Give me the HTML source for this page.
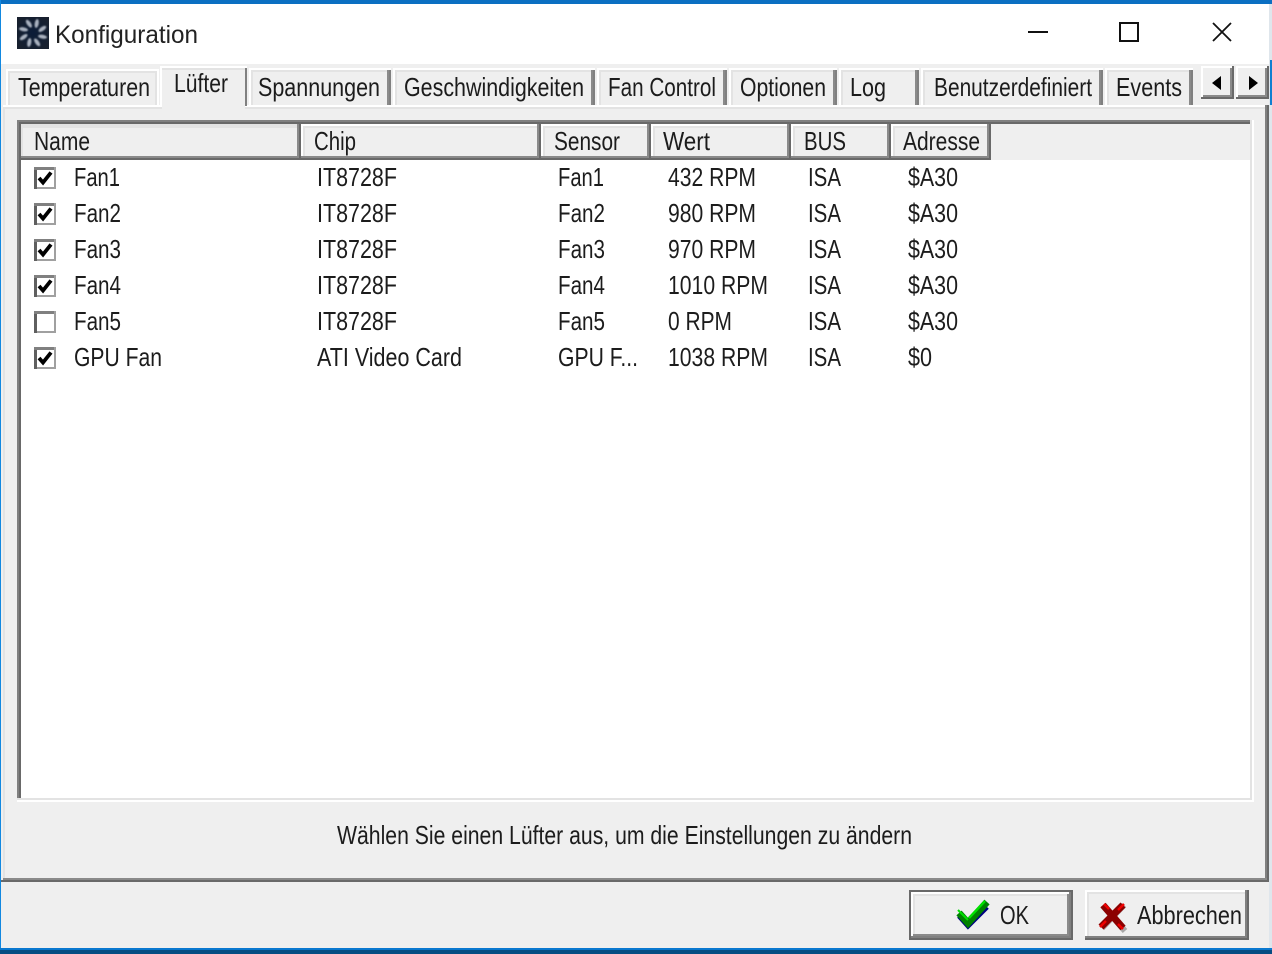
<!DOCTYPE html>
<html><head><meta charset="utf-8"><title>Konfiguration</title>
<style>
html,body{margin:0;padding:0;width:1272px;height:954px;overflow:hidden;background:#efefef}
svg{display:block}
text{font-family:"Liberation Sans",sans-serif;font-size:26px;fill:#1c1c1c}
.r rect{shape-rendering:crispEdges}
</style></head><body>
<svg width="1272" height="954" viewBox="0 0 1272 954" xmlns="http://www.w3.org/2000/svg">
<defs>
<radialGradient id="v" cx="50%" cy="50%" r="60%"><stop offset="0" stop-color="#0b1c38"/><stop offset="1" stop-color="#18202e"/></radialGradient>
<filter id="bl" x="-20%" y="-20%" width="140%" height="140%"><feGaussianBlur stdDeviation="0.9"/></filter>
<g id="cb" class="r">
<rect x="0" y="0" width="22" height="22" fill="#a0a0a0"/>
<rect x="0" y="0" width="3" height="22" fill="#5f5f5f"/>
<rect x="0" y="0" width="20" height="3" fill="#808080"/>
<rect x="3" y="3" width="17" height="17" fill="#fff"/>
</g>
<g id="ck"><polyline points="5,11 9,15.5 17,5.5" fill="none" stroke="#000" stroke-width="3.8"/></g>
</defs>

<g class="r">
<rect width="1272" height="954" fill="#efefef"/>
<!-- title bar + window frame -->
<rect x="0" y="0" width="1272" height="4" fill="#0b6fc2"/>
<rect x="0" y="4" width="1269" height="60" fill="#fff"/>
<rect x="0" y="0" width="1" height="950" fill="#1288e0"/>
<rect x="1269" y="4" width="3" height="946" fill="#dfe6ec"/>
<rect x="1270" y="60" width="2" height="45" fill="#0f7fd0"/>
<rect x="0" y="948" width="1272" height="2" fill="#0a78cf"/>
<rect x="0" y="950" width="1272" height="4" fill="#064c82"/>

<!-- page frame -->
<rect x="3" y="105" width="2" height="773" fill="#e3e3e3"/>
<rect x="3" y="105" width="1263" height="2" fill="#fff"/>
<rect x="5" y="107" width="1260" height="2" fill="#e3e3e3"/>
<rect x="1265" y="105" width="2" height="775" fill="#808080"/>
<rect x="1267" y="105" width="2" height="777" fill="#696969"/>
<rect x="3" y="878" width="1264" height="2" fill="#8a8a8a"/>
<rect x="1" y="880" width="1268" height="2" fill="#696969"/>

<!-- inactive tabs -->
<rect x="6" y="69" width="153" height="36" fill="#fff"/><rect x="8" y="71" width="149" height="34" fill="#e3e3e3"/><rect x="10" y="73" width="145" height="32" fill="#efefef"/>
<rect x="249" y="68" width="142" height="37" fill="#fff"/><rect x="251" y="70" width="136" height="35" fill="#e3e3e3"/><rect x="253" y="72" width="134" height="33" fill="#efefef"/><rect x="387" y="70" width="2" height="35" fill="#8a8a8a"/><rect x="389" y="70" width="2" height="35" fill="#808080"/>
<rect x="393" y="68" width="202" height="37" fill="#fff"/><rect x="395" y="70" width="196" height="35" fill="#e3e3e3"/><rect x="397" y="72" width="194" height="33" fill="#efefef"/><rect x="591" y="70" width="2" height="35" fill="#8a8a8a"/><rect x="593" y="70" width="2" height="35" fill="#808080"/>
<rect x="597" y="68" width="130" height="37" fill="#fff"/><rect x="599" y="70" width="124" height="35" fill="#e3e3e3"/><rect x="601" y="72" width="122" height="33" fill="#efefef"/><rect x="723" y="70" width="2" height="35" fill="#8a8a8a"/><rect x="725" y="70" width="2" height="35" fill="#808080"/>
<rect x="729" y="68" width="108" height="37" fill="#fff"/><rect x="731" y="70" width="102" height="35" fill="#e3e3e3"/><rect x="733" y="72" width="100" height="33" fill="#efefef"/><rect x="833" y="70" width="2" height="35" fill="#8a8a8a"/><rect x="835" y="70" width="2" height="35" fill="#808080"/>
<rect x="839" y="68" width="80" height="37" fill="#fff"/><rect x="841" y="70" width="74" height="35" fill="#e3e3e3"/><rect x="843" y="72" width="72" height="33" fill="#efefef"/><rect x="915" y="70" width="2" height="35" fill="#8a8a8a"/><rect x="917" y="70" width="2" height="35" fill="#808080"/>
<rect x="921" y="68" width="182" height="37" fill="#fff"/><rect x="923" y="70" width="176" height="35" fill="#e3e3e3"/><rect x="925" y="72" width="174" height="33" fill="#efefef"/><rect x="1099" y="70" width="2" height="35" fill="#8a8a8a"/><rect x="1101" y="70" width="2" height="35" fill="#808080"/>
<rect x="1105" y="68" width="88" height="37" fill="#fff"/><rect x="1107" y="70" width="82" height="35" fill="#e3e3e3"/><rect x="1109" y="72" width="80" height="33" fill="#efefef"/><rect x="1189" y="70" width="2" height="35" fill="#8a8a8a"/><rect x="1191" y="70" width="2" height="35" fill="#808080"/>

<!-- active tab -->
<rect x="160" y="66" width="87" height="41" fill="#fff"/>
<rect x="162" y="68" width="83" height="39" fill="#e3e3e3"/>
<rect x="162" y="70" width="83" height="39" fill="#efefef"/>
<rect x="245" y="68" width="2" height="38" fill="#808080"/>

<!-- scroll buttons -->
<rect x="1201" y="66" width="33" height="33" fill="#696969"/><rect x="1201" y="66" width="31" height="31" fill="#fff"/><rect x="1203" y="68" width="29" height="29" fill="#8a8a8a"/><rect x="1203" y="68" width="27" height="27" fill="#efefef"/>
<rect x="1236" y="66" width="33" height="33" fill="#696969"/><rect x="1236" y="66" width="31" height="31" fill="#fff"/><rect x="1238" y="68" width="29" height="29" fill="#8a8a8a"/><rect x="1238" y="68" width="27" height="27" fill="#efefef"/>

<!-- list view -->
<rect x="17" y="120" width="1237" height="682" fill="#fff"/>
<rect x="17" y="120" width="1235" height="680" fill="#e3e3e3"/>
<rect x="17" y="120" width="1233" height="678" fill="#808080"/>
<rect x="19" y="122" width="1231" height="676" fill="#696969"/>
<rect x="21" y="124" width="1229" height="674" fill="#fff"/>
<rect x="21" y="124" width="1229" height="36" fill="#efefef"/>

<!-- header sections -->
<rect x="21" y="124" width="280" height="36" fill="#696969"/><rect x="21" y="124" width="278" height="34" fill="#8a8a8a"/><rect x="21" y="124" width="276" height="32" fill="#e3e3e3"/><rect x="23" y="126" width="274" height="30" fill="#e3e3e3"/><rect x="23" y="128" width="274" height="28" fill="#efefef"/>
<rect x="301" y="124" width="240" height="36" fill="#696969"/><rect x="301" y="124" width="238" height="34" fill="#8a8a8a"/><rect x="301" y="124" width="236" height="32" fill="#fff"/><rect x="303" y="126" width="234" height="30" fill="#e3e3e3"/><rect x="305" y="128" width="232" height="28" fill="#efefef"/>
<rect x="541" y="124" width="110" height="36" fill="#696969"/><rect x="541" y="124" width="108" height="34" fill="#8a8a8a"/><rect x="541" y="124" width="106" height="32" fill="#fff"/><rect x="543" y="126" width="104" height="30" fill="#e3e3e3"/><rect x="545" y="128" width="102" height="28" fill="#efefef"/>
<rect x="651" y="124" width="140" height="36" fill="#696969"/><rect x="651" y="124" width="138" height="34" fill="#8a8a8a"/><rect x="651" y="124" width="136" height="32" fill="#fff"/><rect x="653" y="126" width="134" height="30" fill="#e3e3e3"/><rect x="655" y="128" width="132" height="28" fill="#efefef"/>
<rect x="791" y="124" width="100" height="36" fill="#696969"/><rect x="791" y="124" width="98" height="34" fill="#8a8a8a"/><rect x="791" y="124" width="96" height="32" fill="#fff"/><rect x="793" y="126" width="94" height="30" fill="#e3e3e3"/><rect x="795" y="128" width="92" height="28" fill="#efefef"/>
<rect x="891" y="124" width="100" height="36" fill="#696969"/><rect x="891" y="124" width="98" height="34" fill="#8a8a8a"/><rect x="891" y="124" width="96" height="32" fill="#fff"/><rect x="893" y="126" width="94" height="30" fill="#e3e3e3"/><rect x="895" y="128" width="92" height="28" fill="#efefef"/>

<!-- buttons -->
<rect x="909" y="890" width="164" height="50" fill="#696969"/>
<rect x="911" y="892" width="160" height="46" fill="#808080"/>
<rect x="911" y="892" width="158" height="44" fill="#fff"/>
<rect x="913" y="894" width="156" height="42" fill="#8a8a8a"/>
<rect x="913" y="894" width="154" height="40" fill="#e3e3e3"/>
<rect x="915" y="896" width="152" height="38" fill="#efefef"/>

<rect x="1085" y="890" width="164" height="50" fill="#696969"/>
<rect x="1085" y="890" width="162" height="48" fill="#808080"/>
<rect x="1085" y="890" width="160" height="46" fill="#fff"/>
<rect x="1087" y="892" width="158" height="44" fill="#e3e3e3"/>
<rect x="1089" y="894" width="156" height="42" fill="#efefef"/>
</g>

<!-- scroll arrows -->
<polygon points="1221,76 1221,90 1212,83" fill="#000"/>
<polygon points="1249,76 1249,90 1258,83" fill="#000"/>

<!-- window controls -->
<rect x="1028" y="31" width="20" height="2" fill="#111" shape-rendering="crispEdges"/>
<rect x="1120" y="23" width="18" height="18" fill="none" stroke="#111" stroke-width="2" shape-rendering="crispEdges"/>
<path d="M1213 23L1231 41M1231 23L1213 41" stroke="#111" stroke-width="1.8" fill="none"/>

<!-- app icon -->
<rect x="17" y="17" width="32" height="32" fill="url(#v)"/>
<g fill="#aab2c0" transform="translate(33 33)" filter="url(#bl)">
<ellipse cx="2" cy="-10" rx="2" ry="4.5" transform="rotate(10)"/>
<ellipse cx="2" cy="-10" rx="2" ry="4.5" transform="rotate(55)"/>
<ellipse cx="2" cy="-10" rx="2" ry="4.5" transform="rotate(100)"/>
<ellipse cx="2" cy="-10" rx="2" ry="4.5" transform="rotate(145)"/>
<ellipse cx="2" cy="-10" rx="2" ry="4.5" transform="rotate(190)"/>
<ellipse cx="2" cy="-10" rx="2" ry="4.5" transform="rotate(235)"/>
<ellipse cx="2" cy="-10" rx="2" ry="4.5" transform="rotate(280)"/>
<ellipse cx="2" cy="-10" rx="2" ry="4.5" transform="rotate(325)"/>
</g>
<text x="55" y="43" textLength="143" lengthAdjust="spacingAndGlyphs" style="font-size:25px;fill:#222">Konfiguration</text>

<!-- tab labels -->
<text x="18" y="96" textLength="132" lengthAdjust="spacingAndGlyphs">Temperaturen</text>
<text x="174" y="92" textLength="54" lengthAdjust="spacingAndGlyphs">Lüfter</text>
<text x="258" y="96" textLength="122" lengthAdjust="spacingAndGlyphs">Spannungen</text>
<text x="404" y="96" textLength="180" lengthAdjust="spacingAndGlyphs">Geschwindigkeiten</text>
<text x="608" y="96" textLength="108" lengthAdjust="spacingAndGlyphs">Fan Control</text>
<text x="740" y="96" textLength="86" lengthAdjust="spacingAndGlyphs">Optionen</text>
<text x="850" y="96" textLength="36" lengthAdjust="spacingAndGlyphs">Log</text>
<text x="934" y="96" textLength="158" lengthAdjust="spacingAndGlyphs">Benutzerdefiniert</text>
<text x="1116" y="96" textLength="66" lengthAdjust="spacingAndGlyphs">Events</text>

<!-- header labels -->
<text x="34" y="150" textLength="56" lengthAdjust="spacingAndGlyphs">Name</text>
<text x="314" y="150" textLength="42" lengthAdjust="spacingAndGlyphs">Chip</text>
<text x="554" y="150" textLength="66" lengthAdjust="spacingAndGlyphs">Sensor</text>
<text x="663" y="150" textLength="47" lengthAdjust="spacingAndGlyphs">Wert</text>
<text x="804" y="150" textLength="42" lengthAdjust="spacingAndGlyphs">BUS</text>
<text x="903" y="150" textLength="77" lengthAdjust="spacingAndGlyphs">Adresse</text>

<!-- checkboxes -->
<use href="#cb" x="34" y="167"/><use href="#ck" x="34" y="167"/>
<use href="#cb" x="34" y="203"/><use href="#ck" x="34" y="203"/>
<use href="#cb" x="34" y="239"/><use href="#ck" x="34" y="239"/>
<use href="#cb" x="34" y="275"/><use href="#ck" x="34" y="275"/>
<use href="#cb" x="34" y="311"/>
<use href="#cb" x="34" y="347"/><use href="#ck" x="34" y="347"/>

<!-- rows -->
<text x="74" y="186" textLength="46" lengthAdjust="spacingAndGlyphs">Fan1</text>
<text x="317" y="186" textLength="80" lengthAdjust="spacingAndGlyphs">IT8728F</text>
<text x="558" y="186" textLength="46" lengthAdjust="spacingAndGlyphs">Fan1</text>
<text x="668" y="186" textLength="88" lengthAdjust="spacingAndGlyphs">432 RPM</text>
<text x="808" y="186" textLength="33" lengthAdjust="spacingAndGlyphs">ISA</text>
<text x="908" y="186" textLength="50" lengthAdjust="spacingAndGlyphs">$A30</text>

<text x="74" y="222" textLength="47" lengthAdjust="spacingAndGlyphs">Fan2</text>
<text x="317" y="222" textLength="80" lengthAdjust="spacingAndGlyphs">IT8728F</text>
<text x="558" y="222" textLength="47" lengthAdjust="spacingAndGlyphs">Fan2</text>
<text x="668" y="222" textLength="88" lengthAdjust="spacingAndGlyphs">980 RPM</text>
<text x="808" y="222" textLength="33" lengthAdjust="spacingAndGlyphs">ISA</text>
<text x="908" y="222" textLength="50" lengthAdjust="spacingAndGlyphs">$A30</text>

<text x="74" y="258" textLength="47" lengthAdjust="spacingAndGlyphs">Fan3</text>
<text x="317" y="258" textLength="80" lengthAdjust="spacingAndGlyphs">IT8728F</text>
<text x="558" y="258" textLength="47" lengthAdjust="spacingAndGlyphs">Fan3</text>
<text x="668" y="258" textLength="88" lengthAdjust="spacingAndGlyphs">970 RPM</text>
<text x="808" y="258" textLength="33" lengthAdjust="spacingAndGlyphs">ISA</text>
<text x="908" y="258" textLength="50" lengthAdjust="spacingAndGlyphs">$A30</text>

<text x="74" y="294" textLength="47" lengthAdjust="spacingAndGlyphs">Fan4</text>
<text x="317" y="294" textLength="80" lengthAdjust="spacingAndGlyphs">IT8728F</text>
<text x="558" y="294" textLength="47" lengthAdjust="spacingAndGlyphs">Fan4</text>
<text x="668" y="294" textLength="100" lengthAdjust="spacingAndGlyphs">1010 RPM</text>
<text x="808" y="294" textLength="33" lengthAdjust="spacingAndGlyphs">ISA</text>
<text x="908" y="294" textLength="50" lengthAdjust="spacingAndGlyphs">$A30</text>

<text x="74" y="330" textLength="47" lengthAdjust="spacingAndGlyphs">Fan5</text>
<text x="317" y="330" textLength="80" lengthAdjust="spacingAndGlyphs">IT8728F</text>
<text x="558" y="330" textLength="47" lengthAdjust="spacingAndGlyphs">Fan5</text>
<text x="668" y="330" textLength="64" lengthAdjust="spacingAndGlyphs">0 RPM</text>
<text x="808" y="330" textLength="33" lengthAdjust="spacingAndGlyphs">ISA</text>
<text x="908" y="330" textLength="50" lengthAdjust="spacingAndGlyphs">$A30</text>

<text x="74" y="366" textLength="88" lengthAdjust="spacingAndGlyphs">GPU Fan</text>
<text x="317" y="366" textLength="145" lengthAdjust="spacingAndGlyphs">ATI Video Card</text>
<text x="558" y="366" textLength="80" lengthAdjust="spacingAndGlyphs">GPU F...</text>
<text x="668" y="366" textLength="100" lengthAdjust="spacingAndGlyphs">1038 RPM</text>
<text x="808" y="366" textLength="33" lengthAdjust="spacingAndGlyphs">ISA</text>
<text x="908" y="366" textLength="24" lengthAdjust="spacingAndGlyphs">$0</text>

<!-- status -->
<text x="337" y="844" textLength="575" lengthAdjust="spacingAndGlyphs">Wählen Sie einen Lüfter aus, um die Einstellungen zu ändern</text>

<!-- OK button -->
<polyline points="959,916 968,926 987,907" fill="none" stroke="#000080" stroke-width="5"/>
<polyline points="959,913 968,923 987,902" fill="none" stroke="#008000" stroke-width="7"/>
<polyline points="958,910 961,913 968,920" fill="none" stroke="#00e000" stroke-width="2"/>
<polyline points="969,918 985,901" fill="none" stroke="#00e000" stroke-width="2.4"/>
<text x="1000" y="924" textLength="29" lengthAdjust="spacingAndGlyphs">OK</text>

<!-- Cancel button -->
<path d="M1103 906L1125 931M1124 905L1102 928" stroke="#a8a8a8" stroke-width="6" fill="none"/>
<path d="M1103 905L1123 928M1123 905L1101 927" stroke="#8c0000" stroke-width="7" fill="none"/>
<path d="M1104 904L1109 909M1124 904L1118 910M1100 927L1106 921M1118 924L1123 929" stroke="#f00000" stroke-width="2.4" fill="none"/>
<text x="1137" y="924" textLength="105" lengthAdjust="spacingAndGlyphs">Abbrechen</text>
</svg>
</body></html>
